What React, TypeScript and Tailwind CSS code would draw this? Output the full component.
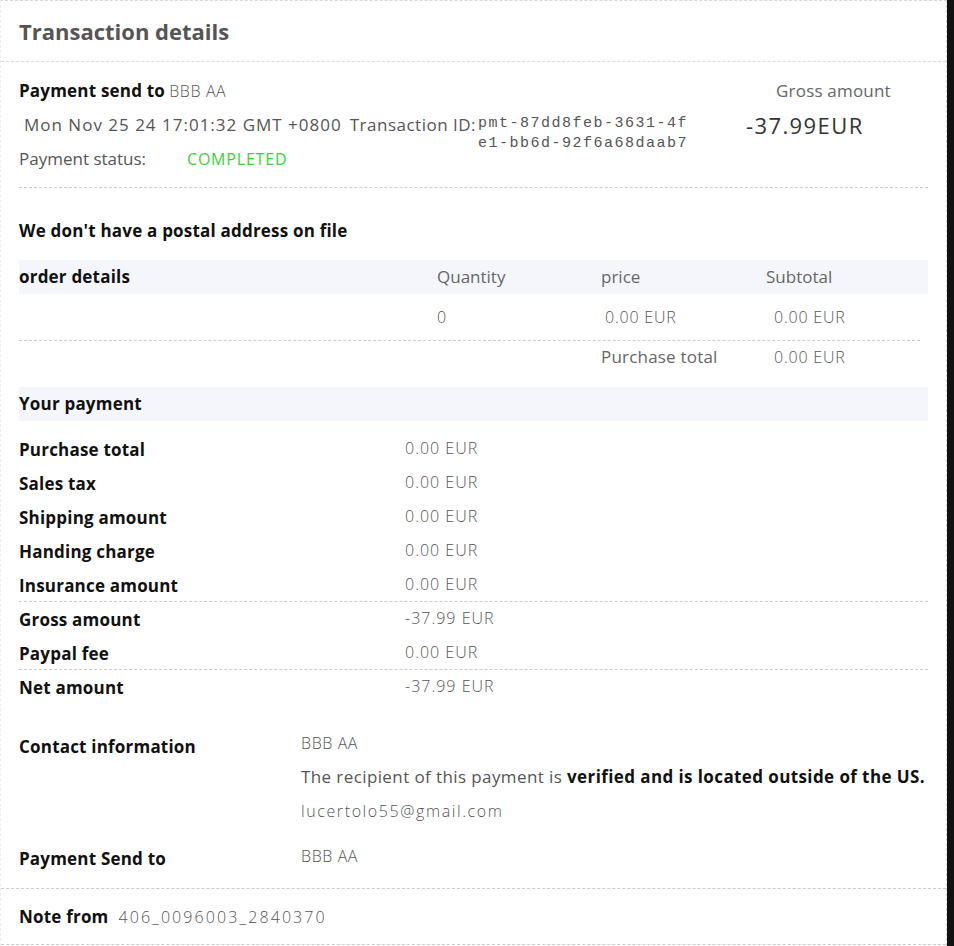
import type { ReactNode } from 'react';

const font = { fontFamily: '"Open Sans", "Noto Sans", Arial, sans-serif' };

const paymentRows: { label: string; value: string; line?: boolean }[] = [
  { label: 'Purchase total', value: '0.00 EUR' },
  { label: 'Sales tax', value: '0.00 EUR' },
  { label: 'Shipping amount', value: '0.00 EUR' },
  { label: 'Handing charge', value: '0.00 EUR' },
  { label: 'Insurance amount', value: '0.00 EUR', line: true },
  { label: 'Gross amount', value: '-37.99 EUR' },
  { label: 'Paypal fee', value: '0.00 EUR', line: true },
  { label: 'Net amount', value: '-37.99 EUR' },
];

function Label({ children }: { children: ReactNode }) {
  return <span className="text-[17px] font-bold tracking-[0.2px] text-[#111]">{children}</span>;
}

function Light({ children, className = '' }: { children: ReactNode; className?: string }) {
  return <span className={`text-[16px] font-light text-[#555] ${className}`}>{children}</span>;
}

export default function App() {
  return (
    <div className="min-h-screen bg-[#111]" style={font}>
      <div className="h-[946px] w-[947px] border-t border-dashed border-l border-r border-[#d8d8d8] border-l-[#eee] bg-white">
        {/* header */}
        <div className="flex h-[61px] items-center border-b border-dashed border-[#ddd] px-[18px]">
          <h1 className="text-[22px] font-bold text-[#555]">Transaction details</h1>
        </div>

        <div className="px-[18px]">
          {/* summary */}
          <div className="flex border-b border-dashed border-[#ccc] pt-[12px] pb-[11px]">
            <div className="flex-1">
              <div className="leading-[34px]">
                <Label>Payment send to</Label> <Light className="tracking-[0.6px]">BBB AA</Light>
              </div>
              <div className="flex h-[34px] items-start">
                <span className="pl-[5px] text-[17px] leading-[34px] tracking-[1px] text-[#555]">
                  Mon Nov 25 24 17:01:32 GMT +0800
                </span>
                <span className="ml-[8px] text-[17px] leading-[34px] tracking-[0.5px] text-[#555]">Transaction ID:</span>
                <span
                  className="ml-[2px] w-[212px] pt-[6px] text-[15px] leading-[20px] tracking-[1.5px] break-all text-[#555]"
                  style={{ fontFamily: '"Liberation Mono", monospace' }}
                >
                  pmt-87dd8feb-3631-4fe1-bb6d-92f6a68daab7
                </span>
              </div>
              <div className="flex leading-[34px]">
                <span className="w-[168px] text-[17px] text-[#555]">Payment status:</span>
                <span className="text-[16px] tracking-[0.8px] text-[#3bd13b]">COMPLETED</span>
              </div>
            </div>
            <div className="w-[182px] shrink-0">
              <div className="pl-[30px] text-[17px] leading-[34px] tracking-[0.2px] text-[#666]">Gross amount</div>
              <div className="text-[22px] leading-[34px] tracking-[1.4px] text-[#333]">-37.99EUR</div>
            </div>
          </div>

          {/* address */}
          <div className="pt-[26px] leading-[34px]">
            <Label>We don't have a postal address on file</Label>
          </div>

          {/* order details */}
          <div className="mt-[12px] grid h-[34px] grid-cols-[418px_164px_165px_1fr] items-center bg-[#f5f6fc]">
            <Label>order details</Label>
            <span className="text-[17px] text-[#666]">Quantity</span>
            <span className="text-[17px] text-[#666]">price</span>
            <span className="text-[17px] text-[#666]">Subtotal</span>
          </div>
          <div className="mr-[8px] grid h-[47px] grid-cols-[418px_164px_165px_1fr] items-center border-b border-dashed border-[#ccc]">
            <span />
            <Light>0</Light>
            <Light className="pl-[4px] tracking-[0.8px]">0.00 EUR</Light>
            <Light className="pl-[8px] tracking-[0.8px]">0.00 EUR</Light>
          </div>
          <div className="grid h-[32px] grid-cols-[582px_165px_1fr] items-center">
            <span />
            <span className="text-[17px] tracking-[0.2px] text-[#666]">Purchase total</span>
            <Light className="pl-[8px] tracking-[0.8px]">0.00 EUR</Light>
          </div>

          {/* your payment */}
          <div className="mt-[14px] flex h-[34px] items-center bg-[#f5f6fc]">
            <Label>Your payment</Label>
          </div>
          <div className="pt-[11px]">
            {paymentRows.map((row) => (
              <div
                key={row.label}
                className={`flex h-[34px] items-center ${row.line ? 'border-b border-dashed border-[#ccc]' : ''}`}
              >
                <span className="w-[386px] pt-[2px]">
                  <Label>{row.label}</Label>
                </span>
                <Light className="-mt-[2px] tracking-[1px]">{row.value}</Light>
              </div>
            ))}
          </div>

          {/* contact */}
          <div className="flex pt-[22px]">
            <span className="w-[282px] pt-[4px] leading-[34px]">
              <Label>Contact information</Label>
            </span>
            <div className="flex flex-col leading-[34px]">
              <Light className="tracking-[0.6px]">BBB AA</Light>
              <span className="text-[17px] tracking-[0.4px] text-[#555]">
                The recipient of this payment is{' '}
                <b className="font-bold text-[#111]">verified and is located outside of the US.</b>
              </span>
              <Light className="tracking-[1.6px]">lucertolo55@gmail.com</Light>
            </div>
          </div>
          <div className="flex pt-[11px] pb-[12px]">
            <span className="w-[282px] pt-[3px] leading-[34px]">
              <Label>Payment Send to</Label>
            </span>
            <Light className="leading-[34px] tracking-[0.6px]">BBB AA</Light>
          </div>
        </div>

        {/* note */}
        <div className="flex h-[57px] items-center border-t border-b border-dashed border-[#ccc] px-[18px]">
          <Label>Note from</Label>
          <Light className="ml-[10px] tracking-[2.1px]">406_0096003_2840370</Light>
        </div>
      </div>
    </div>
  );
}
